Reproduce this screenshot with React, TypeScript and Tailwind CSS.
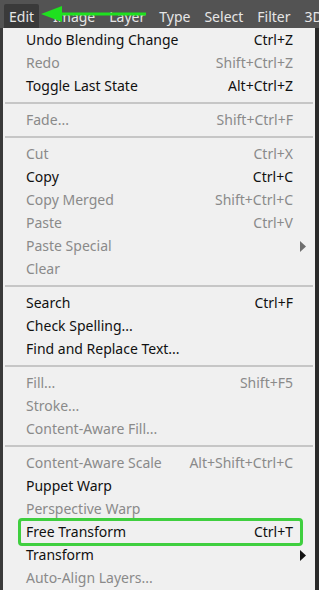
type Item = { label: string; shortcut?: string; disabled?: boolean; sub?: boolean; boxed?: boolean } | "sep";

const items: Item[] = [
  { label: "Undo Blending Change", shortcut: "Ctrl+Z" },
  { label: "Redo", shortcut: "Shift+Ctrl+Z", disabled: true },
  { label: "Toggle Last State", shortcut: "Alt+Ctrl+Z" },
  "sep",
  { label: "Fade...", shortcut: "Shift+Ctrl+F", disabled: true },
  "sep",
  { label: "Cut", shortcut: "Ctrl+X", disabled: true },
  { label: "Copy", shortcut: "Ctrl+C" },
  { label: "Copy Merged", shortcut: "Shift+Ctrl+C", disabled: true },
  { label: "Paste", shortcut: "Ctrl+V", disabled: true },
  { label: "Paste Special", disabled: true, sub: true },
  { label: "Clear", disabled: true },
  "sep",
  { label: "Search", shortcut: "Ctrl+F" },
  { label: "Check Spelling..." },
  { label: "Find and Replace Text..." },
  "sep",
  { label: "Fill...", shortcut: "Shift+F5", disabled: true },
  { label: "Stroke...", disabled: true },
  { label: "Content-Aware Fill...", disabled: true },
  "sep",
  { label: "Content-Aware Scale", shortcut: "Alt+Shift+Ctrl+C", disabled: true },
  { label: "Puppet Warp" },
  { label: "Perspective Warp", disabled: true },
  { label: "Free Transform", shortcut: "Ctrl+T", boxed: true },
  { label: "Transform", sub: true },
  { label: "Auto-Align Layers...", disabled: true },
];

function MenuRow({ item }: { item: Exclude<Item, "sep"> }) {
  const color = item.disabled ? "text-[#8a8a8a]" : "text-[#111]";
  return (
    <div className={`relative flex h-[23px] items-center pl-[23px] pr-[22px] ${color}`}>
      {item.boxed && (
        <div className="pointer-events-none absolute left-[15px] right-[12px] top-[-2px] bottom-[-3px] rounded-[4px] border-[3px] border-[#3fcf3f]" />
      )}
      <span className="flex-1 whitespace-nowrap">{item.label}</span>
      {item.shortcut && <span className="whitespace-nowrap">{item.shortcut}</span>}
      {item.sub && (
        <svg className="absolute right-[8px] top-[7px]" width="7" height="11" viewBox="0 0 7 11">
          <path d="M0 0 L6 5.5 L0 11 Z" fill={item.disabled ? "#6e6e6e" : "#111"} />
        </svg>
      )}
    </div>
  );
}

export default function App() {
  const bar = ["Image", "Layer", "Type", "Select", "Filter", "3D"];
  return (
    <div className="relative h-[590px] w-[319px] overflow-hidden bg-[#2a2a2a] text-[14px]" style={{ fontFamily: '"Noto Sans", "Open Sans", sans-serif' }}>
      {/* menu bar */}
      <div className="flex h-[28px] items-end bg-[#535353] pl-[4px] text-[14px] text-[#e6e6e6]">
        <div className="flex h-[24px] items-center rounded-t-[2px] bg-[#3a3a3a] px-[5px]">Edit</div>
        {bar.map((b) => (
          <div key={b} className="flex h-[24px] items-center pl-[14px] whitespace-nowrap">{b}</div>
        ))}
      </div>
      <svg className="absolute left-0 top-0" width="160" height="28" viewBox="0 0 160 28">
        <path d="M60 12.5 H146 V15.5 H60 Z" fill="#1fe01f" />
        <path d="M41 14 L62 6 L62 22 Z" fill="#1fe01f" />
      </svg>

      {/* dropdown */}
      <div className="flex h-[562px]">
        <div className="w-[3px] bg-[#3a3a3a]" />
        <div className="w-[312px] bg-[#f0f0f0]">
          {items.map((it, i) =>
            it === "sep" ? (
              <div key={i} className="flex h-[11px] items-center px-[2px]">
                <div className="h-[2px] w-full bg-[#c6c6c6]" />
              </div>
            ) : (
              <MenuRow key={i} item={it} />
            )
          )}
        </div>
        <div className="flex-1 bg-[#2a2a2a]" />
      </div>
    </div>
  );
}
